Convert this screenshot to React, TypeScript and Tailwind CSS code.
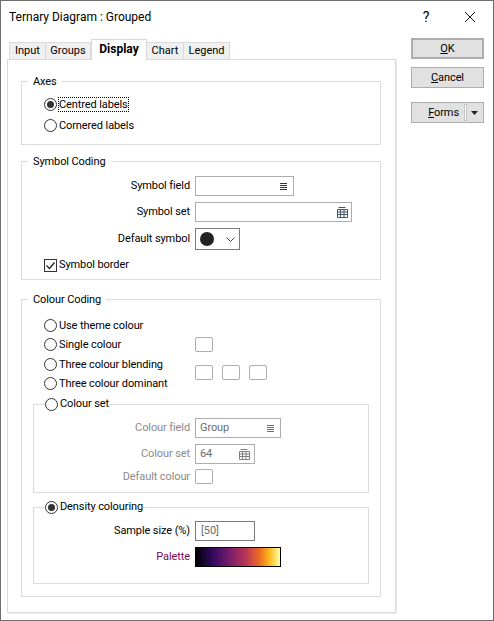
import { ReactNode } from 'react';

function Radio({ checked, disabled }: { checked?: boolean; disabled?: boolean }) {
  return (
    <span className={`flex h-[13px] w-[13px] shrink-0 items-center justify-center rounded-full border bg-white ${disabled ? 'border-[#999999]' : 'border-[#333333]'}`}>
      {checked && <span className="h-[7px] w-[7px] rounded-full bg-[#333333]" />}
    </span>
  );
}

function RadioRow({ label, checked, focus, className = '' }: { label: string; checked?: boolean; focus?: boolean; className?: string }) {
  return (
    <div className={`flex h-[19px] items-center gap-[2px] ${className}`}>
      <Radio checked={checked} />
      <span className={focus ? 'outline-1 outline-dotted outline-black leading-[13px]' : ''}>{label}</span>
    </div>
  );
}

function Group({ title, className = '', children }: { title: ReactNode; className?: string; children: ReactNode }) {
  return (
    <fieldset className={`border border-[#dcdcdc] ${className}`}>
      <legend className="ml-[6px] flex h-[16px] items-center px-[5px]">
        {typeof title === 'string' ? <span className="pt-[2px]">{title}</span> : title}
      </legend>
      {children}
    </fieldset>
  );
}

function FieldRow({ label, labelClass = '', className = '', children }: { label: string; labelClass?: string; className?: string; children: ReactNode }) {
  return (
    <div className={`flex items-center ${className}`}>
      <span className={`w-[173px] shrink-0 pr-[5px] text-right ${labelClass}`}>{label}</span>
      {children}
    </div>
  );
}

function ListIcon({ color = '#333333' }: { color?: string }) {
  return (
    <svg width="7" height="7" viewBox="0 0 7 7" className="shrink-0">
      <path d="M0 .5h7M0 2.500h7M0 4.500h7M0 6.500h7" stroke={color} strokeWidth="1" />
    </svg>
  );
}

function TableIcon({ color = '#44546a' }: { color?: string }) {
  return (
    <svg width="11" height="11" viewBox="0 0 11 11" className="shrink-0">
      <path d="M1.500 .5h7M.5 2.500h10v8H.5zM.5 5h10M.5 7.500h10M3.500 3v7M7 3v7" fill="none" stroke={color} strokeWidth="1" />
    </svg>
  );
}

function Swatch() {
  return <span className="block h-[15px] w-[18px] rounded-[2px] border border-[#adadad]" />;
}

function Tab({ label, width, active }: { label: string; width: string; active?: boolean }) {
  if (active) {
    return (
      <div className={`relative z-10 mb-[-1px] flex h-[21px] items-center justify-center border border-b-0 border-[#d9d9d9] bg-white pb-[2px] text-[12px] font-bold tracking-normal ${width}`}>
        {label}
      </div>
    );
  }
  return (
    <div className={`flex h-[17px] items-center justify-center border border-b-0 border-l-0 border-[#d9d9d9] bg-[#f0f0f0] tracking-normal first:border-l ${width}`}>
      {label}
    </div>
  );
}

function WinButton({ className = '', children }: { className?: string; children: ReactNode }) {
  return (
    <div className={`flex h-[21px] w-[73px] items-center justify-center border border-[#adadad] bg-[#e1e1e1] ${className}`}>
      {children}
    </div>
  );
}

export default function App() {
  return (
    <div className="flex h-[621px] w-[494px] flex-col border border-[#6e6e6e] bg-white font-['Roboto',sans-serif] text-[11px] leading-[16px] tracking-[-0.1px] text-black">
      <div className="flex h-[37px] shrink-0 items-center justify-between pb-[6px]">
        <span className="pl-[8px] text-[12px] tracking-normal">Ternary Diagram : Grouped</span>
        <div className="flex items-center">
          <span className="w-[30px] pr-[4px] text-center text-[14px]">?</span>
          <svg width="12" height="12" viewBox="0 0 12 12" className="ml-[21px] mr-[17px]">
            <path d="M1 1l10 10M11 1L1 11" stroke="#111111" strokeWidth="1" />
          </svg>
        </div>
      </div>

      <div className="flex flex-1 items-start">
        <div className="ml-[6px] w-[389px]">
          <div className="flex h-[21px] items-end pl-[2px]">
            <Tab label="Input" width="w-[37px]" />
            <Tab label="Groups" width="w-[45px]" />
            <Tab label="Display" width="w-[56px]" active />
            <Tab label="Chart" width="w-[37px]" />
            <Tab label="Legend" width="w-[46px]" />
          </div>

          <div className="flex h-[554px] flex-col border border-[#d9d9d9] pl-[13px] pr-[14px] pt-[13px] shadow-[1px_1px_0_#ececec]">
            <Group title="Axes" className="h-[72px]">
              <div className="pl-[22px] pt-[6px]">
                <RadioRow label="Centred labels" checked focus />
                <RadioRow label="Cornered labels" className="mt-[2px]" />
              </div>
            </Group>

            <Group title="Symbol Coding" className="mt-[8px] h-[127px]">
              <div className="flex flex-col pt-[7px]">
                <FieldRow label="Symbol field" className="h-[20px]">
                  <div className="flex h-[20px] w-[99px] items-center justify-end border border-[#adadad] pr-[6px]">
                    <ListIcon />
                  </div>
                </FieldRow>
                <FieldRow label="Symbol set" className="mt-[6px] h-[20px]">
                  <div className="flex h-[20px] w-[157px] items-center justify-end border border-[#adadad] pr-[3px]">
                    <TableIcon />
                  </div>
                </FieldRow>
                <FieldRow label="Default symbol" className="mt-[6px] h-[22px]">
                  <div className="flex h-[22px] w-[45px] items-center justify-between border border-[#7a7a7a] pl-[4px] pr-[4px]">
                    <span className="h-[14px] w-[14px] rounded-full bg-[#222222]" />
                    <svg width="9" height="5" viewBox="0 0 9 5">
                      <path d="M.5.5l4 4 4-4" fill="none" stroke="#444444" />
                    </svg>
                  </div>
                </FieldRow>
                <div className="mt-[8px] flex h-[14px] items-center gap-[2px] pl-[22px]">
                  <span className="flex h-[13px] w-[13px] items-center justify-center border border-[#333333]">
                    <svg width="11" height="11" viewBox="0 0 11 11">
                      <path d="M1.500 5.500l3 3 5-6" fill="none" stroke="#222222" strokeWidth="1.300" />
                    </svg>
                  </span>
                  <span>Symbol border</span>
                </div>
              </div>
            </Group>

            <Group title="Colour Coding" className="mt-[11px] h-[306px]">
              <div className="pl-[22px] pt-[9px]">
                <div className="flex">
                  <div className="w-[151px]">
                    <RadioRow label="Use theme colour" />
                    <RadioRow label="Single colour" />
                    <RadioRow label="Three colour blending" className="mt-[1px]" />
                    <RadioRow label="Three colour dominant" />
                  </div>
                  <div className="pt-[21px]">
                    <Swatch />
                    <div className="mt-[13px] flex gap-[9px]">
                      <Swatch />
                      <Swatch />
                      <Swatch />
                    </div>
                  </div>
                </div>
              </div>

              <Group title={<RadioRow label="Colour set" />} className="mx-[11px] mt-[3px] h-[97px] [&>legend]:ml-[11px] [&>legend]:px-0">
                <div className="pt-[6px] text-[#8a8a8a]">
                  <FieldRow label="Colour field" className="h-[20px] -ml-[12px] w-[280px]">
                    <div className="flex h-[20px] w-[86px] items-center justify-between border border-[#adadad] pl-[4px] pr-[6px] text-[#6d6d6d]">
                      <span>Group</span>
                      <ListIcon color="#6d6d6d" />
                    </div>
                  </FieldRow>
                  <FieldRow label="Colour set" className="mt-[6px] h-[20px] -ml-[12px] w-[280px]">
                    <div className="flex h-[20px] w-[60px] items-center justify-between border border-[#adadad] pl-[4px] pr-[4px] text-[#6d6d6d]">
                      <span>64</span>
                      <TableIcon color="#808080" />
                    </div>
                  </FieldRow>
                  <FieldRow label="Default colour" className="mt-[5px] h-[15px] -ml-[12px] w-[280px]">
                    <Swatch />
                  </FieldRow>
                </div>
              </Group>

              <Group title={<RadioRow label="Density colouring" checked />} className="mx-[11px] mt-[6px] h-[85px] [&>legend]:ml-[11px] [&>legend]:px-0">
                <div className="pt-[6px]">
                  <FieldRow label="Sample size (%)" className="h-[20px] -ml-[12px] w-[280px]">
                    <div className="flex h-[20px] w-[60px] items-center border border-[#7a7a7a] pl-[5px] text-[#6d6d6d]">[50]</div>
                  </FieldRow>
                  <FieldRow label="Palette" labelClass="text-[#7a0a50]" className="mt-[6px] h-[20px] -ml-[12px] w-[280px]">
                    <div className="h-[20px] w-[86px] border border-black bg-[linear-gradient(to_right,#000004,#320a5e_20%,#781c6d_40%,#bc3754_60%,#ed6925_75%,#fbb61a_87%,#fcffa4)]" />
                  </FieldRow>
                </div>
              </Group>
            </Group>
          </div>
        </div>

        <div className="ml-[15px] flex flex-col">
          <WinButton className="border-2 border-[#0078d7]">
            <span><u>O</u>K</span>
          </WinButton>
          <WinButton className="mt-[8px]">
            <span><u>C</u>ancel</span>
          </WinButton>
          <WinButton className="mt-[14px] justify-end">
            <span className="pr-[6px]"><u>F</u>orms</span>
            <span className="h-[15px] w-px bg-white outline outline-[#c4c4c4]" />
            <svg width="7" height="4" viewBox="0 0 7 4" className="mx-[5px]">
              <path d="M0 0h7L3.500 4z" fill="#222222" />
            </svg>
          </WinButton>
        </div>
      </div>
    </div>
  );
}
